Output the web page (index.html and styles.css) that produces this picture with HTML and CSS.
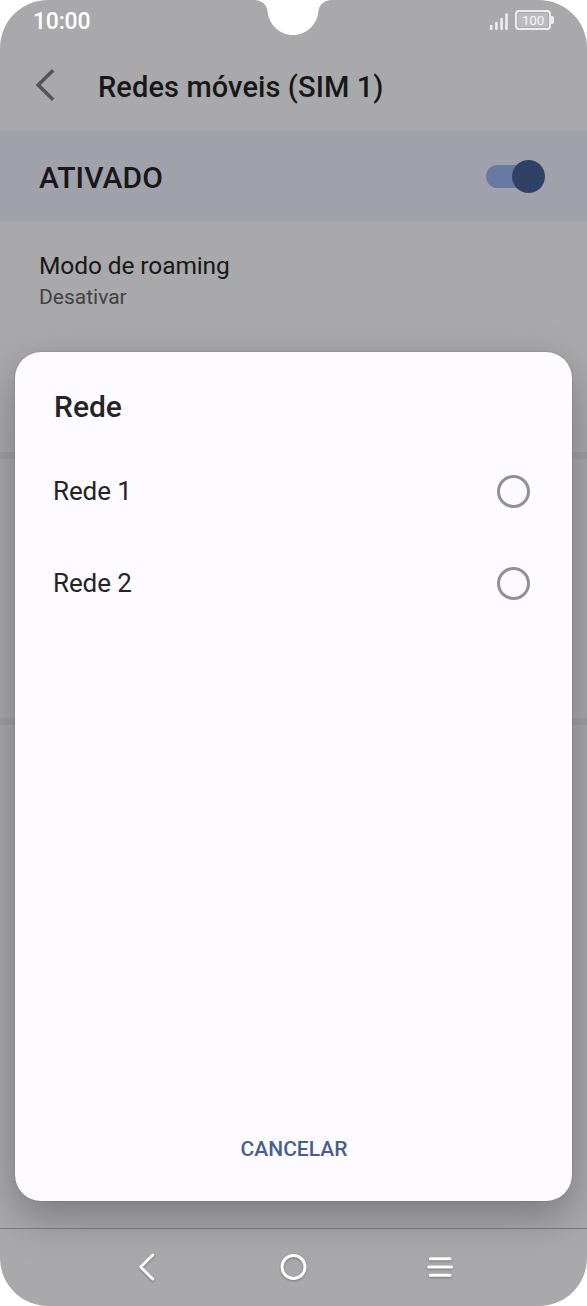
FILE: index.html
```html
<!DOCTYPE html>
<html lang="pt">
<head>
<meta charset="utf-8">
<title>Redes móveis</title>
<link rel="stylesheet" href="styles.css">
</head>
<body>
<div class="phone">
  <svg class="notch" width="76" height="36" viewBox="0 0 76 36"><path d="M0 0C8 1 12 5 12.700 12C14 25 25 35 38 35S62 25 63.300 12C64 5 68 1 76 0Z" fill="#fff"/></svg>
  <div class="status">
    <span class="clock">10:00</span>
    <div class="indicators">
      <svg width="20" height="21" viewBox="0 0 20 21" fill="none" stroke="#ededee" stroke-width="2.600" stroke-linecap="round"><path d="M2.200 18.800V16M7.400 18.800V13M12.600 18.800V9M17.500 18.800V4.500"/></svg>
      <div class="battery"><span class="charge">100</span></div>
    </div>
  </div>
  <header class="header">
    <svg class="back" width="24" height="36" viewBox="0 0 24 36" fill="none" stroke="#555557" stroke-width="3.600"><path d="M20.200 3.200L5.200 18L20.200 32.800"/></svg>
    <h1 class="title">Redes móveis (SIM 1)</h1>
  </header>
  <div class="master">
    <span class="state">ATIVADO</span>
    <div class="switch"><span class="track"></span><span class="thumb"></span></div>
  </div>
  <main class="settings">
    <section class="section roaming">
      <div class="label">Modo de roaming</div>
      <div class="value">Desativar</div>
    </section>
    <section class="section middle"></section>
  </main>
  <div class="dialog">
    <h2 class="dialog-title">Rede</h2>
    <div class="option"><span>Rede 1</span><i class="radio"></i></div>
    <div class="option"><span>Rede 2</span><i class="radio"></i></div>
    <div class="cancel">CANCELAR</div>
  </div>
  <nav class="nav">
    <svg width="30" height="36" viewBox="0 0 30 36"><path d="M20.800 6L8.700 18L20.800 30"/></svg>
    <svg width="30" height="36" viewBox="0 0 30 36"><circle cx="14.500" cy="18" r="11.500"/></svg>
    <svg width="30" height="36" viewBox="0 0 30 36"><path d="M4.300 9.700H24M2.700 18H25.600M4.300 26.200H24"/></svg>
  </nav>
</div>
</body>
</html>
```
FILE: styles.css
```css
* { box-sizing: border-box; }
body { margin: 0; background: #fff; font-family: Roboto, sans-serif; color: #18181a; }
.phone {
  position: relative;
  display: flex;
  flex-direction: column;
  width: 587px;
  height: 1306px;
  overflow: hidden;
  border-radius: 48px;
  background: #a9a9ab;
}
.notch { position: absolute; top: 0; left: 255px; }
.status { display: flex; justify-content: space-between; height: 42px; padding: 0 33px; }
.clock { font-size: 23px; font-weight: 500; line-height: 43px; letter-spacing: -.2px; color: #fff; }
.indicators { display: flex; gap: 6px; padding-top: 10px; }
.battery {
  position: relative;
  width: 36px;
  height: 20px;
  padding: 1px;
  border: 2px solid #ededee;
  border-radius: 4px;
}
.battery::after {
  content: "";
  position: absolute;
  top: 4px;
  right: -5px;
  width: 3px;
  height: 8px;
  border-radius: 0 2px 2px 0;
  background: #ededee;
}
.charge { display: block; height: 14px; background: #bcbcbe; color: #f4f4f5; font-size: 13.500px; line-height: 15px; text-align: center; letter-spacing: -.3px; }
.indicators > .battery { margin-right: 3px; }
.header { display: flex; align-items: center; height: 88px; padding-left: 33px; gap: 41px; }
.back { margin-top: -3px; }
.title { margin: 0; padding-top: 1px; font-size: 29px; font-weight: 500; line-height: 36px; letter-spacing: .1px; }
.master { display: flex; align-items: center; justify-content: space-between; height: 92px; padding: 0 42px 0 39px; background: #a1a1ac; }
.state { padding-top: 2px; font-size: 30px; font-weight: 500; letter-spacing: .1px; }
.switch { display: flex; align-items: center; width: 59px; }
.track { width: 44px; height: 23px; border-radius: 12px; background: #677aa5; }
.thumb { flex: none; width: 33px; height: 33px; margin-left: -18px; border-radius: 50%; background: #2f4265; }
.settings { flex: 1; }
.section { border-bottom: 7px solid #a0a0a2; }
.roaming { height: 237px; padding: 28px 39px 0; }
.label { font-size: 24.500px; line-height: 32px; letter-spacing: -.1px; }
.value { font-size: 21px; line-height: 31px; color: #414144; }
.middle { height: 266px; }
.dialog {
  position: absolute;
  top: 352px;
  left: 15px;
  display: flex;
  flex-direction: column;
  width: 557px;
  height: 849px;
  padding: 36px 42px 32px 38px;
  border-radius: 26px;
  background: #fdfbff;
  box-shadow: 0 16px 44px rgba(0, 0, 0, .28), 0 0 2px rgba(0, 0, 0, .2);
  color: #242427;
}
.dialog-title { margin: 0 0 19px 1px; font-size: 30px; font-weight: 500; line-height: 38px; }
.option { display: flex; align-items: center; justify-content: space-between; height: 92px; padding-top: 1px; padding-bottom: 1px; font-size: 26px; letter-spacing: -.1px; }
.radio { width: 33px; height: 33px; border: 3px solid #8f9098; border-radius: 50%; }
.cancel { margin-top: auto; padding-left: 5px; font-size: 21px; font-weight: 500; line-height: 40px; text-align: center; color: #465e91; }
.nav { display: flex; justify-content: center; height: 78px; padding-top: 20px; gap: 117px; border-top: 1px solid rgba(80, 76, 80, .5); position: relative; }
.nav svg { fill: none; stroke: #fff; stroke-width: 3; stroke-linecap: round; stroke-linejoin: round; filter: drop-shadow(0 1px 1px rgba(0, 0, 0, .3)); }
```
